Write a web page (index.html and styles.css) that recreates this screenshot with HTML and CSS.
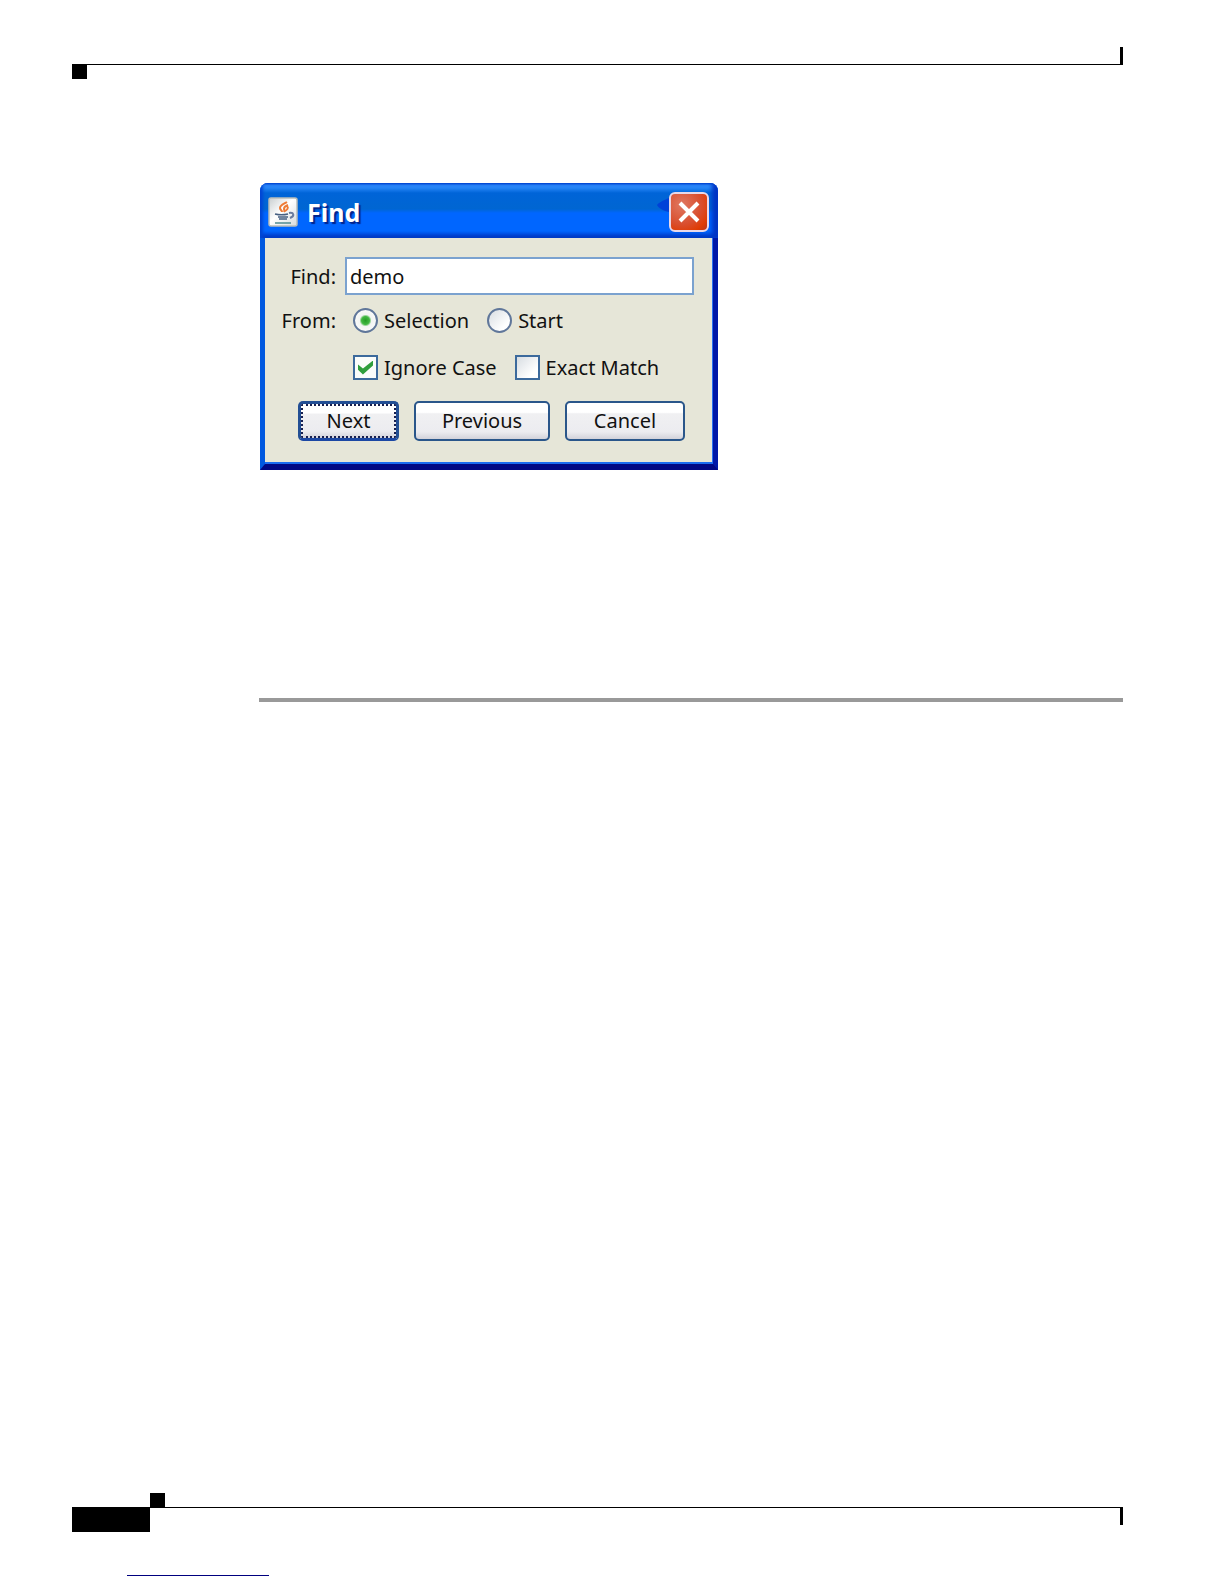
FILE: index.html
```html
<!DOCTYPE html>
<html lang="en">
<head>
  <meta charset="UTF-8" />
  <meta name="viewport" content="width=device-width, initial-scale=1.0"/>
  <title>Find</title>
  <link rel="stylesheet" href="styles.css">
</head>
<body>
  <header class="page-header">
    <div class="tick"></div>
    <div class="rule"></div>
    <div class="square"></div>
  </header>

  <main class="content">
    <section class="dialog" aria-labelledby="dialog-title">
      <div class="titlebar">
        <svg class="java-icon" viewBox="0 0 30 30" aria-hidden="true">
          <defs>
            <linearGradient id="tile" x1="0" y1="0" x2="1" y2="1">
              <stop offset="0" stop-color="#c9ced0"/>
              <stop offset="0.45" stop-color="#ffffff"/>
              <stop offset="1" stop-color="#d5dadd"/>
            </linearGradient>
          </defs>
          <rect x="1" y="1" width="28" height="28" rx="2" fill="url(#tile)" stroke="#b9bdb9" stroke-width="1.5"/>
          <path d="M19 5c-3 2-7 3-7 6 0 2 2 2 2 4M20 8c-3 1-4 2-4 4 0 1 1 1 0 3M19 9c2 2 0 4-2 5" fill="none" stroke="#ee7b36" stroke-width="2"/>
          <path d="M7 17c4 1 9 1 13 0M10 20h10M11 22h8" fill="none" stroke="#465f81" stroke-width="1.6"/>
          <path d="M21 16c5-1 6 3 1 5" fill="none" stroke="#6b7c9e" stroke-width="2"/>
          <path d="M7 26h16" fill="none" stroke="#4f8b91" stroke-width="1.6"/>
        </svg>
        <h1 id="dialog-title">Find</h1>
        <svg class="glint" viewBox="0 0 12 14" aria-hidden="true">
          <path d="M12 0C7 2 1 5 0 7c1 3 7 6 12 7z" fill="#0041d8"/>
        </svg>
        <button type="button" class="close" aria-label="Close">
          <svg viewBox="0 0 24 24" aria-hidden="true">
            <path d="M3 3l18 18M21 3L3 21" fill="none" stroke="#fff" stroke-width="4"/>
          </svg>
        </button>
      </div>

      <form class="find-form">
        <div class="fields">
          <label class="name" for="find-text">Find:</label>
          <input class="text" type="text" id="find-text" value="demo">

          <span class="name" id="from-label">From:</span>
          <div class="options" role="radiogroup" aria-labelledby="from-label">
            <label><input type="radio" name="from" checked>Selection</label>
            <label><input type="radio" name="from">Start</label>
          </div>

          <div class="options checks">
            <label><input type="checkbox" checked>Ignore Case</label>
            <label><input type="checkbox">Exact Match</label>
          </div>
        </div>

        <div class="buttons">
          <button type="button" class="btn next">Next</button>
          <button type="button" class="btn">Previous</button>
          <button type="button" class="btn">Cancel</button>
        </div>
      </form>
    </section>

    <hr class="divider">
  </main>

  <footer class="page-footer">
    <div class="square"></div>
    <div class="rule"></div>
    <div class="footer-row">
      <div class="page-block"></div>
      <div class="tick"></div>
    </div>
    <div class="underline"></div>
  </footer>
</body>
</html>
```

FILE: styles.css
```css
* {
  box-sizing: border-box;
}

body {
  margin: 0;
  min-height: 100vh;
  padding: 47px 101px 8px 72px;
  display: flex;
  flex-direction: column;
  background-color: #fff;
  color: #111;
  font-family: "Noto Sans", Tahoma, sans-serif;
  font-size: 20px;
}

/* page rules */
.page-header, .page-footer {
  display: flex;
  flex-direction: column;
}

.rule {
  height: 1px;
  background-color: #000;
}

.square {
  width: 15px;
  height: 14px;
  background-color: #000;
}

.tick {
  width: 3px;
  height: 17px;
  background-color: #000;
  align-self: flex-end;
}

.page-footer {
  margin-top: auto;
}

.page-footer .square {
  margin-left: 78px;
}

.footer-row {
  display: flex;
  justify-content: space-between;
}

.footer-row .tick {
  align-self: flex-start;
}

.page-block {
  width: 78px;
  height: 24px;
  background-color: #000;
}

.underline {
  width: 142px;
  height: 1px;
  margin: 43px 0 0 55px;
  background-color: #00007f;
}

.content {
  padding: 104px 0 0 187px;
}

.divider {
  height: 4px;
  margin: 228px 0 0;
  border: none;
  background-color: #999;
}

/* dialog window */
.dialog {
  width: 458px;
  margin-left: 1px;
  border-radius: 8px 8px 0 0;
  background-color: #0a50dc;
  overflow: hidden;
}

.titlebar {
  display: flex;
  align-items: center;
  height: 55px;
  padding: 3px 9px 0 8px;
  background: linear-gradient(#0055d8 0, #3090ff 2px, #2484f5 5px, #0064d8 10px, #0066d2 26px, #0066ff 30px, #0066ff 48px, #0048d8 52px, #0038b8 55px);
  box-shadow: inset 3px 0 3px #0046d5, inset -6px 0 4px #0034c4;
}

.java-icon {
  width: 30px;
  height: 30px;
}

.titlebar h1 {
  margin: 0 auto 0 9px;
  color: #fff;
  font-size: 25px;
  line-height: 32px;
  text-shadow: 2px 2px 1px #00238c;
}

.glint {
  width: 12px;
  height: 14px;
  margin-bottom: 14px;
}

.close {
  display: flex;
  align-items: center;
  justify-content: center;
  width: 40px;
  height: 40px;
  padding: 0;
  border: 2px solid #e8d8e8;
  border-radius: 6px;
  background: radial-gradient(circle at 30% 30%, #e07862, #d94e2e 55%, #e03c04 80%, #b83418);
}

.close svg {
  width: 24px;
  height: 24px;
}

.find-form {
  padding: 19px 19px 23px 13px;
  border-style: solid;
  border-color: #0a50dc #0018a8 #000884 #0058e0;
  border-width: 0 5px 6px 5px;
  background-color: #e6e6d8;
  box-shadow: inset 0 -2px #1a6cf0, inset -1px 0 #2a70f0;
}

.fields {
  display: grid;
  grid-template-columns: 58px 1fr;
  column-gap: 9px;
  align-items: center;
}

.name {
  text-align: right;
}

.text {
  width: 100%;
  height: 38px;
  padding: 0 3px;
  border: 2px solid #7ba2cf;
  background-color: #fff;
  color: #111;
  font: inherit;
}

.options {
  display: flex;
  gap: 18px;
  height: 50px;
  padding-left: 8px;
}

.checks {
  grid-column: 2;
  height: 44px;
}

.options label {
  display: flex;
  align-items: center;
  gap: 6px;
}

.options input {
  appearance: none;
  width: 25px;
  height: 25px;
  margin: 0;
  border: 2px solid #3c6a9c;
  background: linear-gradient(135deg, #d8dde2, #fff 75%);
}

.options input[type="radio"] {
  border-color: #60779a;
  border-radius: 50%;
}

.options input[type="radio"]:checked {
  background: radial-gradient(circle, #249c24 0, #42b842 4px, #f2f4f2 6px, #fff);
}

.options input[type="checkbox"]:checked {
  background: #fafcfa;
}

/* tick mark, drawn inside the box */
.options input[type="checkbox"]:checked::before {
  content: "";
  display: block;
  width: 15px;
  height: 14px;
  margin: 4px 3px;
  background-color: #2f9e3c;
  clip-path: polygon(0 28%, 33% 57%, 100% 0, 100% 36%, 33% 100%, 0 66%);
}

.buttons {
  display: grid;
  grid-template-columns: 101fr 136fr 120fr;
  gap: 15px;
  margin: 12px 9px 0 20px;
}

.btn {
  height: 40px;
  padding: 0 0 2px;
  border: 2px solid #2a568a;
  border-radius: 5px;
  background: linear-gradient(#fff 0, #fff 26%, #f0f0f2 30%, #ececf0 80%, #d2d2da);
  color: #111;
  font: inherit;
}

.next {
  border: 3px solid #234f94;
  border-bottom-color: #1c48a4;
  outline: 2px dotted #182050;
  outline-offset: -5px;
}
```
